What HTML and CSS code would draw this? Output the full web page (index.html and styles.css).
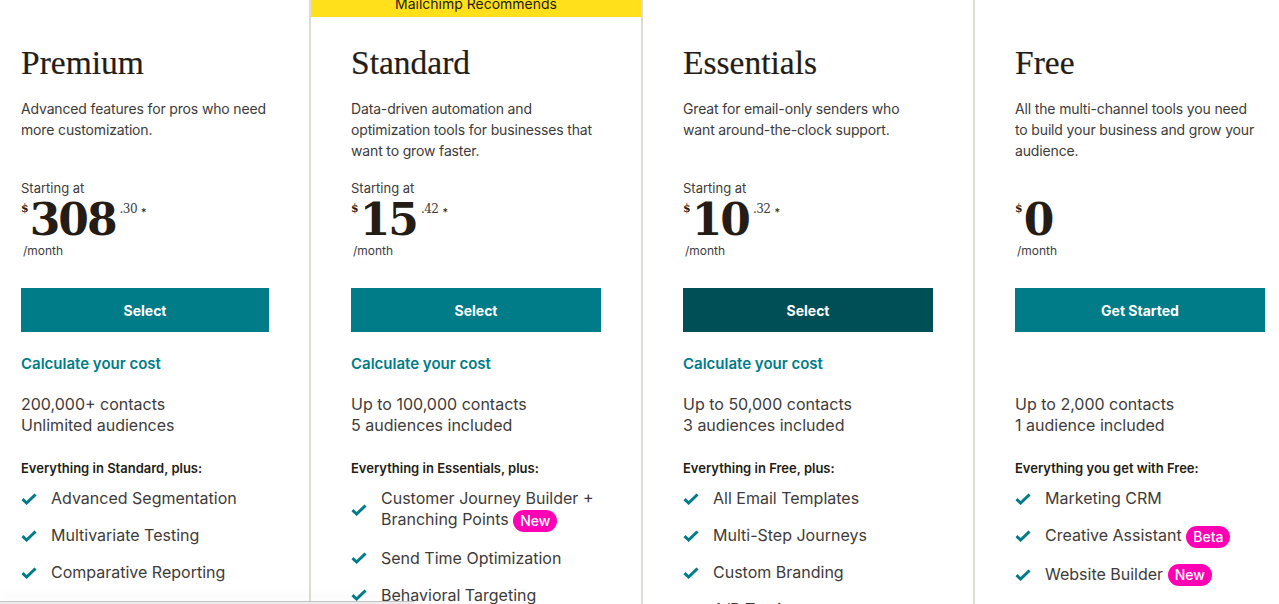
FILE: index.html
```html
<!DOCTYPE html>
<html lang="en">
<head>
<meta charset="utf-8">
<title>Pricing</title>
<link rel="stylesheet" href="styles.css">
</head>
<body>
<div class="plans">
  <section class="plan plan-first">
    <h2 class="plan-name">Premium</h2>
    <p class="plan-desc">Advanced features for pros who need more customization.</p>
    <p class="starting">Starting at</p>
    <div class="price"><span class="cur">$</span><span class="amount">308</span><span class="cents">.30</span><span class="star">*</span></div>
    <p class="per">/month</p>
    <a class="btn">Select</a>
    <a class="calc">Calculate your cost</a>
    <p class="contacts">200,000+ contacts<br>Unlimited audiences</p>
    <p class="includes">Everything in Standard, plus:</p>
    <ul class="features">
      <li><svg class="check" viewBox="0 0 16 12"><path d="M1.5 6.2 L5.6 10 L14.5 1.5"/></svg><span>Advanced Segmentation</span></li>
      <li><svg class="check" viewBox="0 0 16 12"><path d="M1.5 6.2 L5.6 10 L14.5 1.5"/></svg><span>Multivariate Testing</span></li>
      <li><svg class="check" viewBox="0 0 16 12"><path d="M1.5 6.2 L5.6 10 L14.5 1.5"/></svg><span>Comparative Reporting</span></li>
    </ul>
  </section>
  <section class="plan">
    <div class="recommend"><span>Mailchimp Recommends</span></div>
    <h2 class="plan-name">Standard</h2>
    <p class="plan-desc">Data-driven automation and optimization tools for businesses that want to grow faster.</p>
    <p class="starting">Starting at</p>
    <div class="price"><span class="cur">$</span><span class="amount">15</span><span class="cents">.42</span><span class="star">*</span></div>
    <p class="per">/month</p>
    <a class="btn">Select</a>
    <a class="calc">Calculate your cost</a>
    <p class="contacts">Up to 100,000 contacts<br>5 audiences included</p>
    <p class="includes">Everything in Essentials, plus:</p>
    <ul class="features">
      <li><svg class="check" viewBox="0 0 16 12"><path d="M1.5 6.2 L5.6 10 L14.5 1.5"/></svg><span>Customer Journey Builder + Branching Points <b class="badge">New</b></span></li>
      <li><svg class="check" viewBox="0 0 16 12"><path d="M1.5 6.2 L5.6 10 L14.5 1.5"/></svg><span>Send Time Optimization</span></li>
      <li><svg class="check" viewBox="0 0 16 12"><path d="M1.5 6.2 L5.6 10 L14.5 1.5"/></svg><span>Behavioral Targeting</span></li>
    </ul>
  </section>
  <section class="plan">
    <h2 class="plan-name">Essentials</h2>
    <p class="plan-desc">Great for email-only senders who want around-the-clock support.</p>
    <p class="starting">Starting at</p>
    <div class="price"><span class="cur">$</span><span class="amount">10</span><span class="cents">.32</span><span class="star">*</span></div>
    <p class="per">/month</p>
    <a class="btn btn-dark">Select</a>
    <a class="calc">Calculate your cost</a>
    <p class="contacts">Up to 50,000 contacts<br>3 audiences included</p>
    <p class="includes">Everything in Free, plus:</p>
    <ul class="features">
      <li><svg class="check" viewBox="0 0 16 12"><path d="M1.5 6.2 L5.6 10 L14.5 1.5"/></svg><span>All Email Templates</span></li>
      <li><svg class="check" viewBox="0 0 16 12"><path d="M1.5 6.2 L5.6 10 L14.5 1.5"/></svg><span>Multi-Step Journeys</span></li>
      <li><svg class="check" viewBox="0 0 16 12"><path d="M1.5 6.2 L5.6 10 L14.5 1.5"/></svg><span>Custom Branding</span></li>
      <li><svg class="check" viewBox="0 0 16 12"><path d="M1.5 6.2 L5.6 10 L14.5 1.5"/></svg><span>A/B Testing</span></li>
    </ul>
  </section>
  <section class="plan">
    <h2 class="plan-name">Free</h2>
    <p class="plan-desc">All the multi-channel tools you need to build your business and grow your audience.</p>
    <p class="starting">&nbsp;</p>
    <div class="price"><span class="cur">$</span><span class="amount">0</span></div>
    <p class="per">/month</p>
    <a class="btn">Get Started</a>
    <a class="calc">&nbsp;</a>
    <p class="contacts">Up to 2,000 contacts<br>1 audience included</p>
    <p class="includes">Everything you get with Free:</p>
    <ul class="features">
      <li><svg class="check" viewBox="0 0 16 12"><path d="M1.5 6.2 L5.6 10 L14.5 1.5"/></svg><span>Marketing CRM</span></li>
      <li><svg class="check" viewBox="0 0 16 12"><path d="M1.5 6.2 L5.6 10 L14.5 1.5"/></svg><span>Creative Assistant <b class="badge">Beta</b></span></li>
      <li><svg class="check" viewBox="0 0 16 12"><path d="M1.5 6.2 L5.6 10 L14.5 1.5"/></svg><span>Website Builder <b class="badge">New</b></span></li>
    </ul>
  </section>
</div>
<div class="bottom-edge"></div>
</body>
</html>
```
FILE: styles.css
```css
html, body {
  margin: 0;
  padding: 0;
  background: #ffffff;
  height: 604px;
  overflow: hidden;
}
body {
  font-family: Inter, "Noto Sans", sans-serif;
  color: #403b3b;
  position: relative;
}
.plans {
  display: flex;
  align-items: stretch;
  height: 604px;
}
.plan {
  position: relative;
  flex: 0 0 250px;
  padding: 43px 40px 0 40px;
  border-left: 2px solid #dddcd3;
  display: flex;
  flex-direction: column;
  align-items: flex-start;
}
.plan > * {
  flex-shrink: 0;
}
.plan-first {
  flex: 0 0 248px;
  padding-left: 21px;
  border-left: none;
}
.recommend {
  position: absolute;
  top: 0;
  left: 0;
  right: 0;
  height: 17px;
  background: #ffe01b;
  overflow: hidden;
  display: flex;
  justify-content: center;
  align-items: flex-end;
}
.recommend span {
  font-size: 14px;
  line-height: 14px;
  margin-bottom: 6px;
  color: #241c15;
}
.plan-name {
  margin: 0;
  font-family: "Liberation Serif", "Times New Roman", serif;
  font-weight: normal;
  font-size: 33.5px;
  line-height: 40px;
  color: #241c15;
  -webkit-text-stroke: 0.2px #241c15;
}
.plan-desc {
  margin: 15px 0 0 0;
  max-width: 246px;
  font-size: 14px;
  line-height: 21px;
  letter-spacing: -0.15px;
  min-height: 63px;
  color: #403b3b;
}
.starting {
  margin: 18px 0 0 0;
  font-size: 13px;
  line-height: 18px;
  color: #403b3b;
}
.price {
  display: flex;
  align-items: flex-start;
  color: #241c15;
  height: 44px;
  margin-top: 1px;
}
.cur {
  font-family: "DejaVu Serif", serif;
  font-weight: bold;
  font-size: 11px;
  line-height: 11px;
  margin-top: 5px;
  margin-right: 1px;
}
.amount {
  font-family: "DejaVu Serif", serif;
  font-weight: bold;
  font-size: 44px;
  line-height: 44px;
  letter-spacing: -2px;
}
.cents {
  font-family: "DejaVu Serif", serif;
  font-size: 12px;
  line-height: 12px;
  margin-top: 5px;
  margin-left: 4px;
  letter-spacing: -0.5px;
  color: #403b3b;
}
.star {
  font-size: 11px;
  line-height: 11px;
  margin-top: 9px;
  margin-left: 4px;
}
.per {
  margin: 1px 0 0 2px;
  font-size: 12px;
  line-height: 16px;
  color: #403b3b;
}
.btn {
  display: flex;
  align-items: center;
  justify-content: center;
  align-self: stretch;
  margin-top: 29px;
  height: 44px;
  background: #007c89;
  color: #ffffff;
  font-size: 14px;
  font-weight: 700;
}
.btn-dark {
  background: #004e56;
}
.calc {
  margin-top: 21px;
  font-size: 15px;
  line-height: 21px;
  font-weight: 600;
  color: #007c89;
}
.contacts {
  margin: 20px 0 0 0;
  font-size: 16px;
  line-height: 21px;
  color: #403b3b;
}
.includes {
  margin: 23px 0 0 0;
  font-size: 13px;
  line-height: 18px;
  font-weight: 600;
  color: #241c15;
}
.features {
  list-style: none;
  margin: 11px 0 0 0;
  padding: 0;
  display: flex;
  flex-direction: column;
  gap: 16px;
}
.features li {
  display: flex;
  align-items: center;
  gap: 14px;
  font-size: 16px;
  line-height: 21px;
  color: #403b3b;
}
.check {
  flex: 0 0 16px;
  width: 16px;
  height: 12px;
}
.check path {
  fill: none;
  stroke: #007c89;
  stroke-width: 3;
}
.badge {
  display: inline-block;
  font-weight: 500;
  font-size: 14px;
  line-height: 22px;
  padding: 0 7px;
  border-radius: 11px;
  background: #ff00b4;
  color: #ffffff;
  vertical-align: middle;
}
.bottom-edge {
  position: absolute;
  left: 0;
  bottom: 0;
  width: 414px;
  height: 2px;
  background: #ececec;
  border-top: 1px solid #c4c4c4;
  box-shadow: 0 -6px 10px rgba(0, 0, 0, 0.05);
}
```
